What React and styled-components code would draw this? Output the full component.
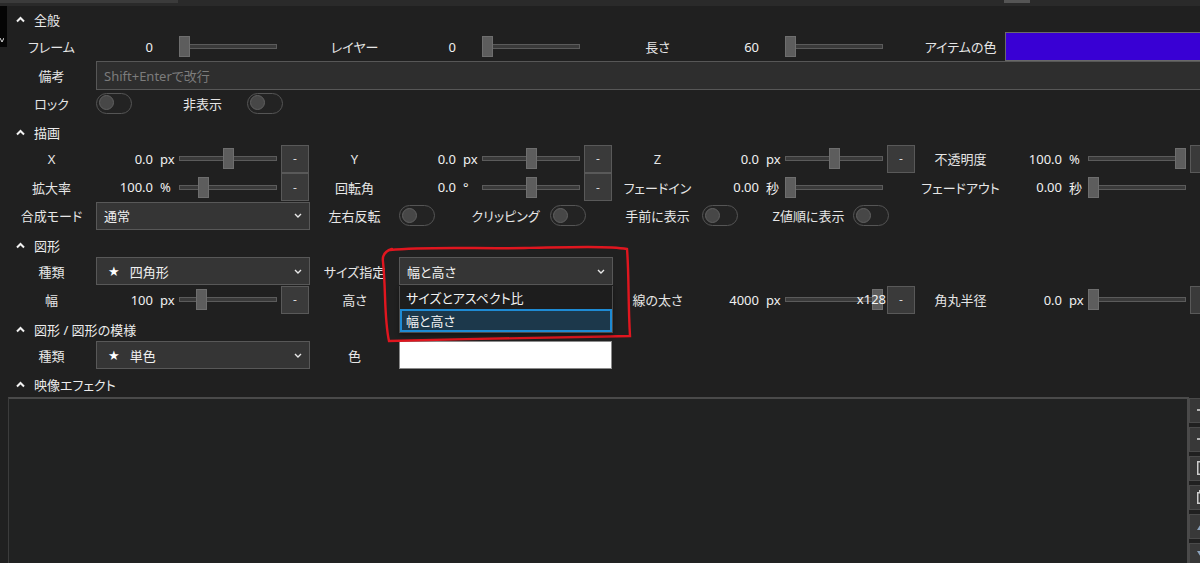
import React from 'react';
import styled, { createGlobalStyle, css } from 'styled-components';

const GlobalStyle = createGlobalStyle`
  html, body {
    margin: 0;
    padding: 0;
    background: #202020;
    overflow: hidden;
  }
  body {
    font-family: "Noto Sans", "Noto Sans CJK JP", sans-serif;
  }
`;

const Root = styled.div`
  position: relative;
  width: 1200px;
  height: 563px;
  overflow: hidden;
  background: #202020;
  color: #e6e6e6;
  font-size: 13px;
  font-feature-settings: "palt";
  display: flex;
  flex-direction: column;
`;

const TopStrip = styled.div`
  height: 6px;
  flex-shrink: 0;
  background: #2a2a2a;
  display: flex;
  align-items: flex-start;
`;

const StripSeg = styled.div`
  height: 3px;
  width: ${p => p.$w}px;
  margin-left: ${p => p.$ml || 0}px;
  background: ${p => p.$c};
`;

const Body = styled.div`
  flex: 1;
  display: flex;
  min-height: 0;
`;

const Gutter = styled.div`
  width: 7px;
  flex-shrink: 0;
`;

const GutterBlock = styled.div`
  height: 41px;
  background: #050505;
  display: flex;
  align-items: flex-end;
  padding-bottom: 4px;
  box-sizing: border-box;
`;

const Content = styled.div`
  width: 1193px;
  flex-shrink: 0;
  display: flex;
  flex-direction: column;
`;

const Header = styled.div`
  height: ${p => (p.$first ? 26 : 27)}px;
  padding-top: ${p => (p.$first ? 0 : 3)}px;
  box-sizing: border-box;
  display: flex;
  align-items: center;
  gap: 9px;
  padding-left: 9px;
  color: #ececec;
`;

const Row = styled.div`
  height: 28.5px;
  display: grid;
  grid-template-columns: repeat(4, 89px 214px);
  align-items: center;
`;

const Label = styled.div`
  text-align: center;
  white-space: nowrap;
  color: #e6e6e6;
`;

const Control = styled.div`
  position: relative;
  height: 100%;
  display: flex;
  align-items: center;
  min-width: 0;
`;

const Num = styled.span`
  width: 57px;
  flex-shrink: 0;
  text-align: right;
  color: #f0f0f0;
  white-space: nowrap;
`;

const Unit = styled.span`
  width: 26px;
  flex-shrink: 0;
  padding-left: 7px;
  box-sizing: border-box;
  color: #f0f0f0;
  white-space: nowrap;
`;

const SliderBox = styled.div`
  position: relative;
  width: 98px;
  height: 21px;
  flex-shrink: 0;
`;

const Track = styled.div`
  position: absolute;
  left: 0;
  right: 0;
  top: 8px;
  height: 3px;
  background: #3a3a3a;
  border: 1px solid #5b5b5b;
`;

const Thumb = styled.div`
  position: absolute;
  top: 0;
  width: 9px;
  height: 19px;
  background: #5d5d5d;
  border: 1px solid #6e6e6e;
`;

const Tip = styled.span`
  position: absolute;
  right: -3px;
  top: 1px;
  color: #f4f4f4;
  white-space: nowrap;
`;

const MinusButton = styled.div`
  width: 28px;
  height: 28px;
  margin-left: 4px;
  flex-shrink: 0;
  box-sizing: border-box;
  background: #3a3a3a;
  border: 1px solid #595959;
  color: #d8d8d8;
  display: flex;
  align-items: center;
  justify-content: center;
  font-size: 12px;
`;

const Switch = styled.div`
  position: relative;
  width: 36px;
  height: 21px;
  box-sizing: border-box;
  border: 1.5px solid #555;
  border-radius: 11px;
  background: #232323;

  &::after {
    content: '';
    position: absolute;
    left: 1.5px;
    top: 1.5px;
    width: 15px;
    height: 15px;
    box-sizing: border-box;
    border-radius: 50%;
    background: #474747;
    border: 1px solid #606060;
  }
`;

const ToggleGroup = styled.div`
  height: 100%;
  display: grid;
  grid-template-columns: 62px 89px 1fr;
  align-items: center;
`;

const Select = styled.div`
  width: 100%;
  height: 28px;
  box-sizing: border-box;
  display: flex;
  align-items: center;
  padding: 0 7px;
  background: #353535;
  border: 1px solid #585858;
  color: #f0f0f0;
`;

const SelectText = styled.span`
  flex: 1;
  white-space: nowrap;
`;

const Star = styled.span`
  margin: 0 10px 0 4px;
  font-family: "DejaVu Sans", sans-serif;
  font-size: 13px;
  color: #fff;
`;

const Menu = styled.div`
  position: absolute;
  top: 29px;
  left: 0;
  right: 0;
  z-index: 5;
  background: #1d1d1d;
  border: 1px solid #4c4c4c;
  border-top: none;
  box-shadow: 0 2px 4px rgba(0, 0, 0, 0.4);
`;

const MenuItem = styled.div`
  height: 23px;
  box-sizing: border-box;
  display: flex;
  align-items: center;
  padding-left: 6px;
  color: #f2f2f2;
  white-space: nowrap;
  ${p =>
    p.$active &&
    css`
      border: 2px solid #1e8bd4;
      background: #1c384b;
      padding-left: 4px;
    `}
`;

const Swatch = styled.div`
  width: ${p => (p.$wide ? 214 : 213)}px;
  height: ${p => p.$h}px;
  box-sizing: border-box;
  background: ${p => p.$color};
  border: 1px solid ${p => p.$border};
`;

const NoteInput = styled.div`
  grid-column: 2 / -1;
  height: 29px;
  box-sizing: border-box;
  display: flex;
  align-items: center;
  padding-left: 7px;
  background: #2e2e2e;
  border: 1px solid #575757;
  color: #7c7c7c;
`;

const Panel = styled.div`
  flex: 1;
  display: flex;
  margin-left: 1px;
  min-height: 0;
`;

const EffectArea = styled.div`
  flex: 1;
  background: #212222;
  border-top: 2px solid #4a4a4a;
  border-left: 1px solid #3c3c3c;
  border-right: 2px solid #4a4a4a;
`;

const Toolbar = styled.div`
  width: 11px;
  flex-shrink: 0;
  display: flex;
  flex-direction: column;
  gap: 4px;
  padding-top: 1px;
`;

const ToolButton = styled.div`
  width: 26px;
  height: 25px;
  flex-shrink: 0;
  box-sizing: border-box;
  background: #383838;
  border: 1px solid #4a4a4a;
  display: flex;
  align-items: center;
  padding-left: 7px;
`;

const Caret = () => (
  <svg width="9" height="7" viewBox="0 0 9 7">
    <path d="M1 5.5 L4.5 2 L8 5.5" stroke="#f2f2f2" strokeWidth="2" fill="none" />
  </svg>
);

const Chevron = () => (
  <svg width="8" height="5" viewBox="0 0 8 5">
    <path d="M1 1 L4 4 L7 1" stroke="#e8e8e8" strokeWidth="1.4" fill="none" />
  </svg>
);

const Slider = ({ pct, tip }) => (
  <SliderBox>
    <Track />
    <Thumb style={{ left: `${pct * 87}px` }} />
    {tip && <Tip>{tip}</Tip>}
  </SliderBox>
);

const NumberField = ({ value, unit, pct, minus, tip }) => (
  <Control>
    <Num>{value}</Num>
    <Unit>{unit}</Unit>
    <Slider pct={pct} tip={tip} />
    {minus && <MinusButton>-</MinusButton>}
  </Control>
);

const Toggles = ({ label }) => (
  <Control>
    <ToggleGroup>
      <Switch />
      <Label>{label}</Label>
      <Switch />
    </ToggleGroup>
  </Control>
);

const Dropdown = ({ star, text, children }) => (
  <Control>
    <Select>
      {star && <Star>★</Star>}
      <SelectText>{text}</SelectText>
      <Chevron />
    </Select>
    {children}
  </Control>
);

const Section = ({ title, first }) => (
  <Header $first={first}>
    <Caret />
    <span>{title}</span>
  </Header>
);

const toolIcons = [
  <svg key="a" width="10" height="10"><path d="M0 5 H10 M5 0 V10" stroke="#ddd" strokeWidth="1.5" /></svg>,
  <svg key="b" width="10" height="10"><path d="M0 5 H10" stroke="#ddd" strokeWidth="1.5" /></svg>,
  <svg key="c" width="10" height="14"><rect x="0.75" y="0.75" width="8.5" height="12.5" stroke="#ccc" strokeWidth="1.5" fill="none" /></svg>,
  <svg key="d" width="10" height="14"><rect x="0.75" y="2.75" width="8.5" height="10.5" stroke="#ccc" strokeWidth="1.5" fill="none" /><rect x="2" y="0" width="6" height="3" fill="#ccc" /></svg>,
  <svg key="e" width="10" height="8"><path d="M0 8 L5 0 L10 8 Z" fill="#8da4bd" /></svg>,
  <svg key="f" width="10" height="8"><path d="M0 0 L5 8 L10 0 Z" fill="#8da4bd" /></svg>,
];

const App = () => {
  return (
    <Root>
      <GlobalStyle />
      <TopStrip>
        <StripSeg $w={178} $c="#3b3b3b" />
        <StripSeg $w={26} $ml={826} $c="#555" />
      </TopStrip>
      <Body>
        <Gutter>
          <GutterBlock>
            <svg width="4" height="5">
              <path d="M0 0 L2 4 L4 0" stroke="#ddd" strokeWidth="1" fill="none" />
            </svg>
          </GutterBlock>
        </Gutter>
        <Content>
          <Section title="全般" first />
          <Row>
            <Label>フレーム</Label>
            <NumberField value="0" pct={0} />
            <Label>レイヤー</Label>
            <NumberField value="0" pct={0} />
            <Label>長さ</Label>
            <NumberField value="60" pct={0} />
            <Label>アイテムの色</Label>
            <Control>
              <Swatch $wide $h={29} $color="#3900d4" $border="#6a6a6a" />
            </Control>
          </Row>
          <Row>
            <Label>備考</Label>
            <NoteInput>Shift+Enterで改行</NoteInput>
          </Row>
          <Row>
            <Label>ロック</Label>
            <Toggles label="非表示" />
          </Row>

          <Section title="描画" />
          <Row>
            <Label>X</Label>
            <NumberField value="0.0" unit="px" pct={0.5} minus />
            <Label>Y</Label>
            <NumberField value="0.0" unit="px" pct={0.5} minus />
            <Label>Z</Label>
            <NumberField value="0.0" unit="px" pct={0.5} minus />
            <Label>不透明度</Label>
            <NumberField value="100.0" unit="%" pct={1} minus />
          </Row>
          <Row>
            <Label>拡大率</Label>
            <NumberField value="100.0" unit="%" pct={0.22} minus />
            <Label>回転角</Label>
            <NumberField value="0.0" unit="°" pct={0.5} minus />
            <Label>フェードイン</Label>
            <NumberField value="0.00" unit="秒" pct={0} />
            <Label>フェードアウト</Label>
            <NumberField value="0.00" unit="秒" pct={0} />
          </Row>
          <Row>
            <Label>合成モード</Label>
            <Dropdown text="通常" />
            <Label>左右反転</Label>
            <Toggles label="クリッピング" />
            <Label>手前に表示</Label>
            <Toggles label="Z値順に表示" />
          </Row>

          <Section title="図形" />
          <Row>
            <Label>種類</Label>
            <Dropdown star text="四角形" />
            <Label>サイズ指定</Label>
            <Dropdown text="幅と高さ">
              <Menu>
                <MenuItem>サイズとアスペクト比</MenuItem>
                <MenuItem $active>幅と高さ</MenuItem>
              </Menu>
            </Dropdown>
          </Row>
          <Row>
            <Label>幅</Label>
            <NumberField value="100" unit="px" pct={0.2} minus />
            <Label>高さ</Label>
            <Control />
            <Label>線の太さ</Label>
            <NumberField value="4000" unit="px" pct={1} minus tip="x128" />
            <Label>角丸半径</Label>
            <NumberField value="0.0" unit="px" pct={0} minus />
          </Row>

          <Section title="図形 / 図形の模様" />
          <Row>
            <Label>種類</Label>
            <Dropdown star text="単色" />
            <Label>色</Label>
            <Control>
              <Swatch $h={28} $color="#ffffff" $border="#8a8a8a" />
            </Control>
          </Row>

          <Section title="映像エフェクト" />
          <Panel>
            <EffectArea />
            <Toolbar>
              {toolIcons.map(icon => (
                <ToolButton key={icon.key}>{icon}</ToolButton>
              ))}
            </Toolbar>
          </Panel>
        </Content>
      </Body>

      <svg
        width="1200"
        height="563"
        style={{ position: 'absolute', left: 0, top: 0, pointerEvents: 'none' }}
      >
        <path
          d="M390 250 C 430 246, 480 249, 525 248 C 570 247, 610 246, 627 249 C 629 272, 628 302, 630 336 C 560 337, 470 339, 389 341 C 384 318, 386 290, 383 262 C 382 255, 385 251, 392 249"
          stroke="#e0161f"
          strokeWidth="2.4"
          fill="none"
          strokeLinecap="round"
        />
      </svg>
    </Root>
  );
};

export default App;
